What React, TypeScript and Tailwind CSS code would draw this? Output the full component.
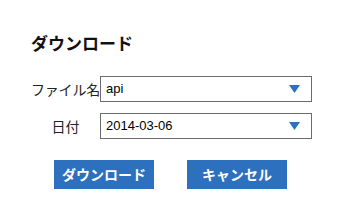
const font = { fontFamily: '"Noto Sans CJK JP", "Liberation Sans", sans-serif' };

function SelectBox({ value }: { value: string }) {
  return (
    <div className="w-[212px] h-[26px] shrink-0 border border-[#6b6b6b] bg-white flex items-center justify-between pl-[5px] pr-[11px]">
      <span className="text-[13px] text-black font-['Liberation_Sans',sans-serif]">{value}</span>
      <svg width="11" height="8" viewBox="0 0 11 8">
        <polygon points="0,0 11,0 5.5,8" fill="#2d70bd" />
      </svg>
    </div>
  );
}

export default function App() {
  return (
    <div className="w-[339px] h-[217px] bg-white pl-[31px] pt-[31px]" style={font}>
      <h1 className="text-[17px] font-bold text-[#111] leading-[24px]">ダウンロード</h1>
      <div className="mt-[21px] flex flex-col gap-[11px]">
        <div className="flex items-center">
          <span className="w-[69px] shrink-0 whitespace-nowrap text-center text-[14px] tracking-[-0.2px] text-[#222]">ファイル名</span>
          <SelectBox value="api" />
        </div>
        <div className="flex items-center">
          <span className="w-[69px] shrink-0 whitespace-nowrap text-center text-[14px] text-[#222]">日付</span>
          <SelectBox value="2014-03-06" />
        </div>
      </div>
      <div className="mt-[21px] ml-[23px] flex gap-[33px]">
        <button className="w-[100px] h-[29px] bg-[#2d70bd] text-white text-[14px] font-bold">ダウンロード</button>
        <button className="w-[100px] h-[29px] bg-[#2d70bd] text-white text-[14px] font-bold">キャンセル</button>
      </div>
    </div>
  );
}
